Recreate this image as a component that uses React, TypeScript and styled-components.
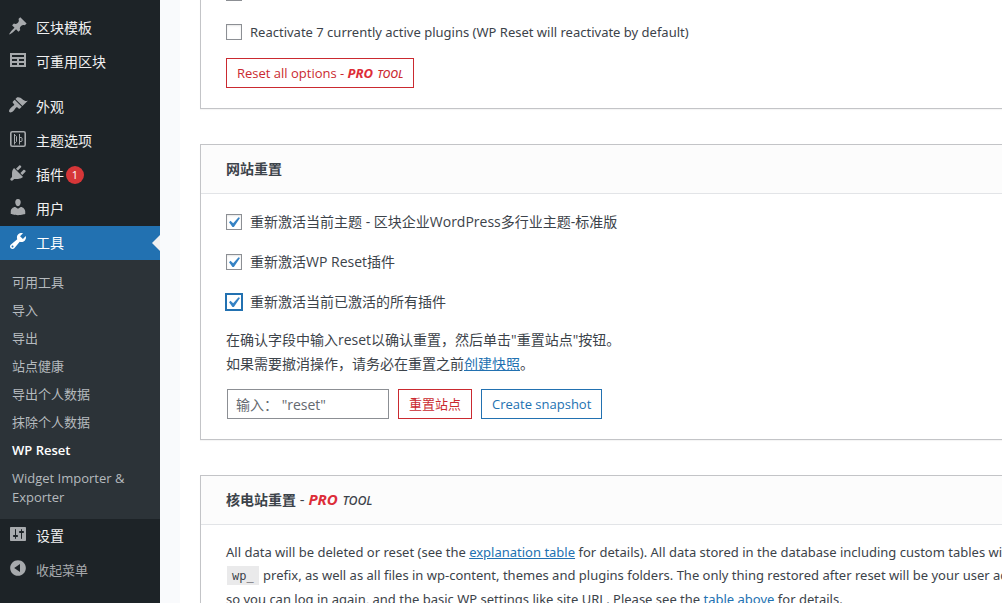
import React from "react";
import styled, { createGlobalStyle, css } from "styled-components";

const sans = `"Noto Sans", "Noto Sans CJK SC", sans-serif`;
const compactSans = `"Open Sans", "Noto Sans CJK SC", sans-serif`;

const GlobalStyle = createGlobalStyle`
  * { box-sizing: border-box; }
  body {
    margin: 0;
    background: #f9fafc;
    color: #3c434a;
    font-family: ${compactSans};
    font-size: 13px;
    line-height: 24px;
  }
  button, input { font-family: inherit; }
`;

const Shell = styled.div`
  display: flex;
  height: 100vh;
  overflow: hidden;
`;

const Sidebar = styled.nav`
  flex: 0 0 160px;
  padding-top: 11px;
  background: #1d2327;
`;

const Menu = styled.ul`
  list-style: none;
  margin: 0;
  padding: 0;
`;

const MenuItem = styled.li<{ $spaced?: boolean }>`
  margin-top: ${(p) => (p.$spaced ? 11 : 0)}px;
`;

const rowStyle = css`
  display: flex;
  align-items: center;
  gap: 8px;
  width: 100%;
  height: 34px;
  padding: 0 8px;
  border: 0;
  font-size: 14px;
  line-height: 18px;
  text-decoration: none;
`;

const MenuLink = styled.a<{ $current?: boolean }>`
  ${rowStyle}
  position: relative;
  color: ${(p) => (p.$current ? "#fff" : "#f0f0f1")};
  background: ${(p) => (p.$current ? "#2271b1" : "transparent")};
  svg { fill: ${(p) => (p.$current ? "#fff" : "#a7aaad")}; }

  &::after {
    content: "";
    display: ${(p) => (p.$current ? "block" : "none")};
    position: absolute;
    right: 0;
    top: 9px;
    border: 8px solid transparent;
    border-right-color: #f0f0f1;
    border-left-width: 0;
  }
`;

const CollapseButton = styled.button`
  ${rowStyle}
  background: none;
  color: #a7aaad;
  font-size: 13px;
  svg { fill: #a7aaad; }
`;

const IconSvg = styled.svg`
  flex: none;
  width: 20px;
  height: 20px;
  margin-bottom: 4px;
`;

const Badge = styled.span`
  width: 18px;
  height: 18px;
  margin-left: -6px;
  border-radius: 9px;
  background: #d63638;
  color: #fff;
  font-size: 11px;
  line-height: 18px;
  text-align: center;
`;

const SubMenu = styled.ul`
  list-style: none;
  margin: 0;
  padding: 8px 0;
  background: #2c3338;
`;

const SubLink = styled.a<{ $current?: boolean }>`
  display: block;
  padding: 5px 12px 4px;
  color: ${(p) => (p.$current ? "#fff" : "#b5babe")};
  font-weight: ${(p) => (p.$current ? 600 : 400)};
  line-height: 19px;
  text-decoration: none;
`;

const Main = styled.main`
  flex: 1;
  min-width: 0;
  margin-left: 20px;
  padding-left: 20px;
  background: #fff;
  overflow: hidden;
`;

const Card = styled.section<{ $scrolled?: boolean }>`
  margin-top: ${(p) => (p.$scrolled ? -36 : 0)}px;
  margin-bottom: 35px;
  border: 1px solid #c3c4c7;
  border-right: 0;
  background: #fff;
  box-shadow: 0 1px 1px rgba(0, 0, 0, 0.04);
`;

const CardTitle = styled.h4`
  margin: 0;
  padding: 12px 25px;
  border-bottom: 1px solid #e2e4e7;
  background: #fcfcfc;
  font-size: 14px;
  font-weight: 700;
  line-height: 24px;
`;

const TitleNote = styled.span`
  font-size: 15px;
  font-weight: 400;
  line-height: 16px;
`;

const CardBody = styled.div`
  padding: 16px 25px 20px;
`;

const CheckList = styled.div<{ $gap: number }>`
  display: grid;
  gap: ${(p) => p.$gap}px;
  margin-bottom: 14px;
`;

const CheckLabel = styled.label<{ $latin?: boolean }>`
  display: flex;
  align-items: center;
  gap: 8px;
  min-height: 24px;
  font-family: ${(p) => (p.$latin ? sans : compactSans)};
  font-size: ${(p) => (p.$latin ? 13 : 14)}px;
  line-height: 24px;
`;

const CheckBoxWrap = styled.span`
  position: relative;
  width: 16px;
  height: 16px;
  svg {
    position: absolute;
    left: -3px;
    top: -2px;
    width: 21px;
    height: 21px;
    fill: #3582c4;
    pointer-events: none;
  }
`;

const CheckBox = styled.input<{ $focused?: boolean }>`
  appearance: none;
  display: block;
  width: 16px;
  height: 16px;
  margin: 0;
  border: 1px solid ${(p) => (p.$focused ? "#2271b1" : "#8c8f94")};
  background: #fff;
  box-shadow: ${(p) =>
    p.$focused ? "0 0 0 1px #2271b1" : "inset 0 1px 2px rgba(0, 0, 0, 0.1)"};
`;

const Text = styled.p`
  margin: 0 0 13px;
  font-size: 14px;
  line-height: 24px;
`;

const WideText = styled.p`
  margin: 0;
  font-family: ${sans};
  font-size: 13px;
  line-height: 23px;
  white-space: nowrap;
`;

const Link = styled.a<{ $plain?: boolean }>`
  color: #2271b1;
  text-decoration: ${(p) => (p.$plain ? "none" : "underline")};
`;

const Code = styled.code`
  margin: 0 1px;
  padding: 3px 5px 2px;
  background: #eaeaeb;
  font-family: "DejaVu Sans Mono", monospace;
  font-size: 12px;
`;

const FormRow = styled.div`
  display: flex;
  align-items: center;
  gap: 9px;
  padding-left: 1px;
`;

const TextInput = styled.input`
  width: 162px;
  height: 30px;
  padding: 0 8px;
  border: 1px solid #8c8f94;
  border-radius: 0;
  background: #fff;
  font-size: 14px;
  &::placeholder { color: #646970; }
`;

const Button = styled.button<{ $tone: "red" | "blue" }>`
  height: 30px;
  padding: 0 10px;
  border: 1px solid ${(p) => (p.$tone === "red" ? "#ca2a30" : "#2271b1")};
  background: #fff;
  color: ${(p) => (p.$tone === "red" ? "#ca2a30" : "#2271b1")};
  font-size: 13px;
  line-height: 28px;
  white-space: nowrap;
`;

const ProMark = styled.i<{ $size: number }>`
  font-family: ${sans};
  font-size: ${(p) => p.$size}px;
  font-variant: small-caps;
  line-height: 16px;
  b {
    margin-right: 1px;
    color: #dd2d38;
    font-weight: 700;
  }
`;

const Pro = ({ size }: { size: number }) => (
  <ProMark $size={size}><b>PRO</b> tool</ProMark>
);

const icons = {
  pin: "M10.44 3.02l1.82-1.82 6.36 6.35-1.83 1.82c-1.05-.68-2.48-.57-3.41.36l-.75.75c-.92.93-1.04 2.35-.35 3.41l-1.83 1.82-2.41-2.41-2.8 2.79c-.42.42-3.38 2.71-3.8 2.29s1.86-3.39 2.28-3.81l2.79-2.79L4.1 9.36l1.83-1.82c1.05.69 2.48.57 3.4-.36l.75-.75c.93-.92 1.05-2.35.36-3.41z",
  table: "M18 17V3H2v14h16zM16 7H4V5h12v2zm-7 4H4V9h5v2zm7 0h-5V9h5v2zm-7 4H4v-2h5v2zm7 0h-5v-2h5v2z",
  brush: "M14.48 11.06L7.41 3.99l1.5-1.5c.5-.56 2.3-.47 3.51.32 1.21.8 1.43 1.28 2.91 2.1 1.18.64 2.45 1.26 4.45.85zm-.71.71L6.7 4.7 4.93 6.47c-.39.39-.39 1.02 0 1.41l1.06 1.06c.39.39.39 1.03 0 1.42-.6.6-1.43 1.11-2.21 1.69-.35.26-.7.53-1.01.84C1.43 14.23.4 16.08 1.4 17.07c.99 1 2.84-.03 4.18-1.36.31-.31.58-.66.85-1.02.57-.78 1.08-1.61 1.69-2.21.39-.39 1.02-.39 1.41 0l1.06 1.06c.39.39 1.02.39 1.41 0z",
  plug: "M13.11 4.36L9.87 7.6 8 5.73l3.24-3.24c.35-.34 1.05-.2 1.56.32.52.51.66 1.21.31 1.55zm-8 1.77l.91-1.12 9.01 9.01-1.19.84c-.71.71-2.63 1.16-3.82 1.16H6.14L4.9 17.26c-.59.59-1.54.59-2.12 0-.59-.58-.59-1.53 0-2.12l1.24-1.24v-3.88c0-1.13.4-3.19 1.09-3.89zm7.26 3.97l3.24-3.24c.34-.35 1.04-.21 1.55.31.52.51.66 1.21.31 1.55l-3.24 3.25z",
  user: "M10 9.25c-2.27 0-2.73-3.44-2.73-3.44C7 4.02 7.82 2 9.97 2c2.16 0 2.98 2.02 2.71 3.81 0 0-.41 3.44-2.68 3.44zm0 2.57L12.72 10c2.39 0 4.52 2.33 4.52 4.53v2.49s-3.65 1.13-7.24 1.13c-3.65 0-7.24-1.13-7.24-1.13v-2.49c0-2.25 1.94-4.48 4.47-4.48z",
  wrench: "M16.68 9.77c-1.34 1.34-3.3 1.67-4.95.99l-5.41 6.52c-.99.99-2.59.99-3.58 0s-.99-2.59 0-3.57l6.52-5.42c-.68-1.65-.35-3.61.99-4.95 1.28-1.28 3.12-1.62 4.72-1.06l-2.89 2.89 2.82 2.82 2.86-2.87c.53 1.58.18 3.39-1.08 4.65zM3.81 16.21c.4.39 1.04.39 1.43 0 .4-.4.4-1.04 0-1.43-.39-.4-1.03-.4-1.43 0-.39.39-.39 1.03 0 1.43z",
  sliders: "M18 16V4c0-.55-.45-1-1-1H3c-.55 0-1 .45-1 1v12c0 .55.45 1 1 1h14c.55 0 1-.45 1-1zM8 11h1c.55 0 1 .45 1 1s-.45 1-1 1H8v1.5c0 .28-.22.5-.5.5s-.5-.22-.5-.5V13H6c-.55 0-1-.45-1-1s.45-1 1-1h1V5.5c0-.28.22-.5.5-.5s.5.22.5.5V11zm5-2h-1c-.55 0-1-.45-1-1s.45-1 1-1h1V5.5c0-.28.22-.5.5-.5s.5.22.5.5V7h1c.55 0 1 .45 1 1s-.45 1-1 1h-1v5.5c0 .28-.22.5-.5.5s-.5-.22-.5-.5V9z",
  collapse: "M10 2.16c4.33 0 7.84 3.51 7.84 7.84s-3.51 7.84-7.84 7.84S2.16 14.33 2.16 10 5.71 2.16 10 2.16zm2 11.72V6.12L6.18 9.97z",
};

const Icon = ({ name }: { name: keyof typeof icons }) => (
  <IconSvg viewBox="0 0 20 20" aria-hidden="true">
    <path d={icons[name]} fillRule="evenodd" />
  </IconSvg>
);

const ThemeIcon = () => (
  <IconSvg viewBox="0 0 20 20" aria-hidden="true">
    <g fill="none" stroke="#a7aaad">
      <rect x="2.8" y="2.8" width="14.4" height="14.4" rx="1.5" strokeWidth="1.6" />
      <path d="M6.5 5v10.5M6.5 6.5h1l1 1v5l-1 1h-1M11.5 5v10.5M11.5 8.5h2l.5.5v3l-.5.5h-2" />
    </g>
  </IconSvg>
);

type CheckProps = {
  label?: string;
  hint?: string;
  checked?: boolean;
  focused?: boolean;
  latin?: boolean;
};

const Check = ({ label, hint, checked, focused, latin }: CheckProps) => (
  <CheckLabel $latin={latin}>
    <CheckBoxWrap>
      <CheckBox type="checkbox" defaultChecked={checked} $focused={focused} aria-label={hint} />
      {checked && (
        <svg viewBox="0 0 20 20" aria-hidden="true">
          <path d="M14.83 4.89l1.34.94-5.81 8.38H9.02L5.78 9.67l1.34-1.25 2.57 2.4z" />
        </svg>
      )}
    </CheckBoxWrap>
    {label}
  </CheckLabel>
);

const toolLinks = ["可用工具", "导入", "导出", "站点健康", "导出个人数据", "抹除个人数据", "WP Reset", "Widget Importer & Exporter"];

export default function App() {
  return (
    <Shell>
      <GlobalStyle />
      <Sidebar>
        <Menu>
          <MenuItem><MenuLink href="#"><Icon name="pin" />区块模板</MenuLink></MenuItem>
          <MenuItem><MenuLink href="#"><Icon name="table" />可重用区块</MenuLink></MenuItem>
          <MenuItem $spaced><MenuLink href="#"><Icon name="brush" />外观</MenuLink></MenuItem>
          <MenuItem><MenuLink href="#"><ThemeIcon />主题选项</MenuLink></MenuItem>
          <MenuItem><MenuLink href="#"><Icon name="plug" />插件<Badge>1</Badge></MenuLink></MenuItem>
          <MenuItem><MenuLink href="#"><Icon name="user" />用户</MenuLink></MenuItem>
          <MenuItem>
            <MenuLink href="#" $current><Icon name="wrench" />工具</MenuLink>
            <SubMenu>
              {toolLinks.map((name) => (
                <li key={name}>
                  <SubLink href="#" $current={name === "WP Reset"}>{name}</SubLink>
                </li>
              ))}
            </SubMenu>
          </MenuItem>
          <MenuItem><MenuLink href="#"><Icon name="sliders" />设置</MenuLink></MenuItem>
          <MenuItem><CollapseButton type="button"><Icon name="collapse" />收起菜单</CollapseButton></MenuItem>
        </Menu>
      </Sidebar>
      <Main>
        <Card $scrolled>
          <CardBody>
            <CheckList $gap={15}>
              <Check hint="Reactivate" />
              <Check latin label="Reactivate 7 currently active plugins (WP Reset will reactivate by default)" />
            </CheckList>
            <Button type="button" $tone="red">Reset all options - <Pro size={13} /></Button>
          </CardBody>
        </Card>
        <Card>
          <CardTitle>网站重置</CardTitle>
          <CardBody>
            <CheckList $gap={16}>
              <Check checked label="重新激活当前主题 - 区块企业WordPress多行业主题-标准版" />
              <Check checked label="重新激活WP Reset插件" />
              <Check checked focused label="重新激活当前已激活的所有插件" />
            </CheckList>
            <Text>
              在确认字段中输入reset以确认重置，然后单击"重置站点"按钮。<br />
              如果需要撤消操作，请务必在重置之前<Link href="#">创建快照</Link>。
            </Text>
            <FormRow>
              <TextInput type="text" placeholder={'输入： "reset"'} aria-label="reset" />
              <Button type="button" $tone="red">重置站点</Button>
              <Button type="button" $tone="blue">Create snapshot</Button>
            </FormRow>
          </CardBody>
        </Card>
        <Card>
          <CardTitle>核电站重置 <TitleNote>- <Pro size={15} /></TitleNote></CardTitle>
          <CardBody>
            <WideText>
              All data will be deleted or reset (see the <Link href="#">explanation table</Link> for details). All data stored in the database including custom tables with<br />
              <Code>wp_</Code> prefix, as well as all files in wp-content, themes and plugins folders. The only thing restored after reset will be your user account<br />
              so you can log in again, and the basic WP settings like site URL. Please see the <Link href="#" $plain>table above</Link> for details.
            </WideText>
          </CardBody>
        </Card>
      </Main>
    </Shell>
  );
}
